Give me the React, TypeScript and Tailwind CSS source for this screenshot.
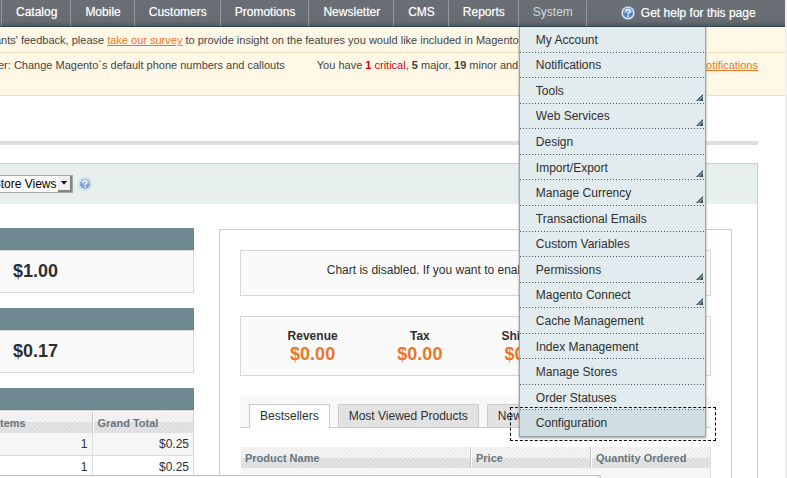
import type { ReactNode } from "react";

const navItems = ["Catalog", "Mobile", "Customers", "Promotions", "Newsletter", "CMS", "Reports"];

const systemMenu: { label: string; sub?: boolean }[] = [
  { label: "My Account" },
  { label: "Notifications" },
  { label: "Tools", sub: true },
  { label: "Web Services", sub: true },
  { label: "Design" },
  { label: "Import/Export", sub: true },
  { label: "Manage Currency", sub: true },
  { label: "Transactional Emails" },
  { label: "Custom Variables" },
  { label: "Permissions", sub: true },
  { label: "Magento Connect", sub: true },
  { label: "Cache Management" },
  { label: "Index Management" },
  { label: "Manage Stores" },
  { label: "Order Statuses" },
  { label: "Configuration" },
];

const totals = ["Revenue", "Tax", "Shipping", "Quantity"];
const tabs = ["Bestsellers", "Most Viewed Products", "New Customers"];

const headCell =
  "h-[21px] border-r border-[#c4c8ca] p-0 pl-[5px] pt-px text-left text-[11px] font-bold leading-5 text-[#67767e] shadow-[inset_1px_0_0_#fff] last:border-r-0";
const headRow =
  "bg-[linear-gradient(to_bottom,transparent_50%,rgba(0,0,0,0.07)_50%),repeating-linear-gradient(135deg,#f6f6f6_0px,#f6f6f6_1px,#e7e7e7_2px,#f6f6f6_3px)]";

function HelpIcon({ className }: { className?: string }) {
  return (
    <svg viewBox="0 0 14 14" className={className} aria-hidden="true">
      <circle cx="7" cy="7" r="6.8" fill="#a9c3e0" />
      <circle cx="7" cy="7" r="6" fill="#eaf2fa" />
      <circle cx="7" cy="7" r="5.1" fill="#4f83bd" />
      <path d="M2.3 6.4a4.7 4.7 0 0 1 9.4 0c-2.6 1.3-6.8 1.3-9.4 0z" fill="#7fa8d6" />
      <path d="M5.1 5.5c0-2.5 3.9-2.4 3.9-.2 0 1.4-1.9 1.4-1.9 2.9" fill="none" stroke="#fff" strokeWidth="1.4" />
      <circle cx="7.1" cy="10" r="0.9" fill="#fff" />
    </svg>
  );
}

function SubArrow() {
  return (
    <svg viewBox="0 0 7 7" className="absolute bottom-[3px] right-[2px] size-[7px]" aria-hidden="true">
      <path d="M0 7L7 0V7z" fill="#a9bbc1" />
      <path d="M0 7L7 0V1.8L1.8 7z" fill="#3b515b" />
      <path d="M3 7L7 3V7z" fill="#3b515b" />
    </svg>
  );
}

function StatCard({ amount }: { amount: string }) {
  return (
    <section>
      <div className="h-[22px] bg-[#6f8992]" />
      <div className="border border-l-0 border-[#d6d6d6] bg-[#fafafa] px-[13px] py-[7px] text-[18px] font-bold leading-[27px] text-[#2f2f2f]">
        {amount}
      </div>
    </section>
  );
}

function Panel({ className = "", children }: { className?: string; children: ReactNode }) {
  return <div className={`border border-[#d6d6d6] bg-[#fafafa] ${className}`}>{children}</div>;
}

function NavBar() {
  return (
    <nav className="relative z-20 flex h-[27px] items-stretch border-b border-[#2d444f] bg-[linear-gradient(to_bottom,#696f74_0px,#666d72_21px,#52595e_26px)] pl-px text-xs leading-6 text-white">
      <ul className="flex">
        {navItems.map((item) => (
          <li key={item} className="border-l border-[#92979a] pl-[14px] pr-[13px] [text-shadow:0_0_1px_#ffffff90]">
            <a href="#">{item}</a>
          </li>
        ))}
        <li className="relative border-x border-[#92979a] pl-[14px] pr-[13px]">
          <a href="#" className="text-[#cfdde1]">
            System
          </a>
          <ul className="absolute left-0 top-[27px] flex h-[410px] w-[187px] flex-col border border-t-0 border-[#9da3a6] bg-[#e2ebee] text-[#2f2f2f] shadow-[0_1px_2px_rgba(0,0,0,0.4)]">
            {systemMenu.map((entry) => (
              <li
                key={entry.label}
                className="relative flex flex-1 items-center bg-[repeating-linear-gradient(to_right,#44565e_0px,#44565e_1px,transparent_1px,transparent_3px)] bg-[length:100%_1px] bg-bottom bg-no-repeat pl-4 last:bg-[#cfdee2] last:bg-none"
              >
                <a href="#">{entry.label}</a>
                {entry.sub && <SubArrow />}
                {entry.label === "Configuration" && (
                  <span className="absolute -bottom-[5px] -left-[10px] -right-[11px] -top-[3px] border border-dashed border-black" />
                )}
              </li>
            ))}
          </ul>
        </li>
      </ul>
      <a href="#" className="ml-[34px] flex items-center gap-[6px] [text-shadow:0_0_1px_#ffffff90]">
        <HelpIcon className="size-[14px]" />
        Get help for this page
      </a>
    </nav>
  );
}

function Notices() {
  return (
    <div className="bg-[#fff8e6] text-[11px] leading-4 text-[#444]">
      <p className="overflow-hidden whitespace-nowrap border-b border-[#eedfb4] pb-[4px] pt-[5px]">
        <span className="-ml-[5px]">
          ants' feedback, please{" "}
          <a href="#" className="text-[#ea7628] underline">
            take our survey
          </a>{" "}
          to provide insight on the features you would like included in Magento.
        </span>
      </p>
      <div className="flex overflow-hidden whitespace-nowrap border-b border-[#eedfb4] pb-[22px] pr-[27px] pt-[4px]">
        <span className="-ml-0.5 mr-8">er: Change Magento`s default phone numbers and callouts</span>
        <span>
          You have <span className="text-[#d6000a]"><b>1</b> critical</span>, <b>5</b> major, <b>19</b> minor and{" "}
          <b>10</b> notice
        </span>
        <a href="#" className="ml-auto text-[#ea7628] underline">
          Go to notifications
        </a>
      </div>
    </div>
  );
}

function StoreSwitcher() {
  return (
    <div className="flex h-10 items-center gap-[5px] overflow-hidden bg-[#e7efef]">
      <label className="relative -ml-7 block">
        <select
          aria-label="Store view"
          className="block h-[18px] w-[101px] appearance-none border border-[#a9a9a9] bg-white pl-[3px] text-xs leading-4 text-black"
        >
          <option>All Store Views</option>
        </select>
        <span className="pointer-events-none absolute bottom-px right-px top-px flex w-[14px] items-center justify-center border-b-2 border-r-2 border-[#858585] bg-[#efefef]">
          <svg viewBox="0 0 6 4" className="h-1 w-[6px]" aria-hidden="true">
            <path d="M0 0h6L3 3.6z" fill="#000" />
          </svg>
        </span>
      </label>
      <HelpIcon className="size-[14px] opacity-70" />
    </div>
  );
}

function LastOrders() {
  return (
    <section>
      <div className="h-[22px] bg-[#6f8992]" />
      <div className="overflow-hidden border border-l-0 border-[#d6d6d6] pt-px">
        <table className="-ml-2 w-[201px] table-fixed border-separate border-spacing-0 text-xs text-[#2f2f2f]">
          <thead>
            <tr className={headRow}>
              <th className={headCell}>Items</th>
              <th className={headCell}>Grand Total</th>
            </tr>
          </thead>
          <tbody>
            {[0, 1, 2].map((row) => (
              <tr key={row} className="odd:bg-[#f6f6f6]">
                <td className="border-b border-r border-[#dadfe0] p-0 pr-1 text-right leading-[22px]">1</td>
                <td className="border-b border-[#dadfe0] p-0 pr-1 text-right leading-[22px]">$0.25</td>
              </tr>
            ))}
          </tbody>
        </table>
      </div>
    </section>
  );
}

function Reports() {
  return (
    <section className="min-w-0 flex-1 border border-b-0 border-[#ccc] px-5 pt-5">
      <Panel className="overflow-hidden whitespace-nowrap pb-[14px] pt-2 text-center text-xs leading-[22px] text-[#2f2f2f]">
        Chart is disabled. If you want to enable chart, click{" "}
        <a href="#" className="text-[#ea7628] underline">
          here
        </a>
        .
      </Panel>
      <Panel className="mt-5 flex pb-[11px] pl-[18px] pr-[22px] pt-[11px] text-center">
        {totals.map((label) => (
          <div key={label} className="flex-1">
            <div className="text-xs font-bold leading-4 text-[#2f2f2f]">{label}</div>
            <div className="text-[18px] font-bold leading-[20px] text-[#ea7628]">
              {label === "Quantity" ? "0" : "$0.00"}
            </div>
          </div>
        ))}
      </Panel>
      <div className="mt-5 flex gap-2 border-b border-[#ccc] bg-[#f8f8f8] pl-[9px] pt-2 text-xs leading-[22px] text-[#2f2f2f]">
        {tabs.map((tab, i) => (
          <button
            key={tab}
            type="button"
            className={
              i === 0
                ? "-mb-px border border-b-0 border-[#ccc] bg-white px-[10px] pb-px"
                : "whitespace-nowrap border border-b-0 border-[#ccc] bg-[#e2e2e2] px-[10px]"
            }
          >
            {tab}
          </button>
        ))}
      </div>
      <table className="mt-[19px] w-full table-fixed border-separate border-spacing-0 border-r border-[#dadfe0] text-xs text-[#2f2f2f]">
        <thead>
          <tr className={headRow}>
            <th className={headCell}>Product Name</th>
            <th className={`w-[120px] ${headCell}`}>Price</th>
            <th className={`w-[119px] ${headCell}`}>Quantity Ordered</th>
          </tr>
        </thead>
        <tbody>
          <tr className="h-6 bg-[#f6f6f6]">
            <td />
            <td />
            <td />
          </tr>
        </tbody>
      </table>
    </section>
  );
}

export default function App() {
  return (
    <div className="h-screen overflow-hidden bg-[#efefef] pr-[2px] font-['Liberation_Sans',Arial,sans-serif]">
      <div className="min-h-full bg-white">
        <NavBar />
        <Notices />
        <main className="pr-[27px] pt-[45px]">
          <div className="h-1 bg-[#dfdfdf]" />
          <div className="mt-[18px] border-r border-t border-[#ccc]">
            <StoreSwitcher />
            <div className="flex items-start gap-[25px] pr-[25px]">
              <div className="flex w-[194px] shrink-0 flex-col gap-[15px] pt-6">
                <StatCard amount="$1.00" />
                <StatCard amount="$0.17" />
                <LastOrders />
              </div>
              <div className="flex min-w-0 flex-1 self-stretch pt-[25px]">
                <Reports />
              </div>
            </div>
          </div>
        </main>
      </div>
      <div className="fixed bottom-0 left-0 h-[3px] w-[601px] rounded-tr-sm border-r border-t border-[#bdbdbd] bg-[#fdfdfd]" />
    </div>
  );
}
